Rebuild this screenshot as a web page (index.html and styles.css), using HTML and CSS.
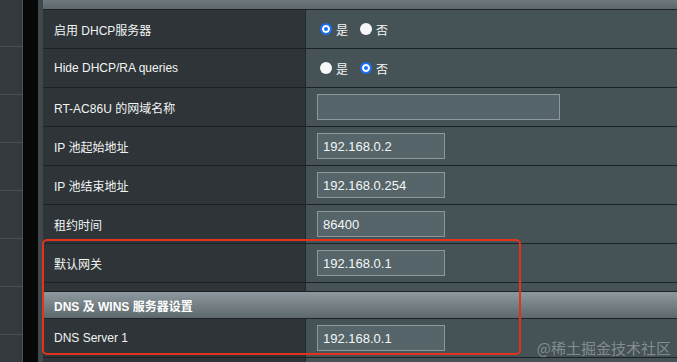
FILE: index.html
```html
<!DOCTYPE html>
<html lang="zh-CN">
<head>
    <meta charset="UTF-8">
    <meta name="viewport" content="width=device-width, initial-scale=1.0">
    <title>LAN - DHCP Server</title>
    <link rel="stylesheet" href="styles.css">
</head>
<body>
    <div class="page">
        <!-- Left menu (cut off) -->
        <div class="menu">
            <div class="menu-item"></div>
            <div class="menu-item"></div>
            <div class="menu-item"></div>
            <div class="menu-item"></div>
            <div class="menu-item"></div>
            <div class="menu-item"></div>
            <div class="menu-item"></div>
            <div class="menu-item"></div>
        </div>
        <div class="gap"></div>

        <!-- Settings table -->
        <div class="content">
            <div class="section-head top"></div>

            <div class="row">
                <div class="label">启用 DHCP服务器</div>
                <div class="value">
                    <span class="radio checked"></span><span class="radio-text">是</span>
                    <span class="radio"></span><span class="radio-text">否</span>
                </div>
            </div>
            <div class="row">
                <div class="label">Hide DHCP/RA queries</div>
                <div class="value">
                    <span class="radio"></span><span class="radio-text">是</span>
                    <span class="radio checked"></span><span class="radio-text">否</span>
                </div>
            </div>
            <div class="row">
                <div class="label">RT-AC86U 的网域名称</div>
                <div class="value"><input class="field wide" type="text" value=""></div>
            </div>
            <div class="row">
                <div class="label">IP 池起始地址</div>
                <div class="value"><input class="field" type="text" value="192.168.0.2"></div>
            </div>
            <div class="row">
                <div class="label">IP 池结束地址</div>
                <div class="value"><input class="field" type="text" value="192.168.0.254"></div>
            </div>
            <div class="row">
                <div class="label">租约时间</div>
                <div class="value"><input class="field" type="text" value="86400"></div>
            </div>
            <div class="row">
                <div class="label">默认网关</div>
                <div class="value"><input class="field" type="text" value="192.168.0.1"></div>
            </div>
            <div class="row spacer">
                <div class="label"></div>
                <div class="value"></div>
            </div>

            <div class="section-head">DNS 及 WINS 服务器设置</div>

            <div class="row">
                <div class="label">DNS Server 1</div>
                <div class="value"><input class="field" type="text" value="192.168.0.1"></div>
            </div>
            <div class="row">
                <div class="label"></div>
                <div class="value"></div>
            </div>

            <!-- Highlight box drawn over the table -->
            <div class="highlight"></div>
        </div>
    </div>

    <div class="watermark">@稀土掘金技术社区</div>
</body>
</html>
```

FILE: styles.css
```css
/* Base page */
body {
    margin: 0;
    padding: 0;
    background-color: #000;
    font-family: "Liberation Sans", "Noto Sans CJK SC", sans-serif;
    font-size: 12px;
    color: #f2f4f4;
    overflow: hidden;
}

.page {
    display: flex;
    height: 362px;
}

/* Left menu column */
.menu {
    width: 22px;
    flex-shrink: 0;
    background-color: #33393c;
    border-right: 1px solid #4c5356;
    margin-top: -1px;
}

.menu-item {
    height: 47px;
    border-bottom: 1px solid #4a5053;
}

.gap {
    width: 15px;
    flex-shrink: 0;
    background-color: #060707;
}

/* Main table area */
.content {
    position: relative;
    flex: 1;
    border-left: 5px solid #41484b;
    background-color: #2e3437;
}

.section-head {
    height: 26px;
    display: flex;
    align-items: center;
    padding-left: 11px;
    font-weight: bold;
    color: #ffffff;
    background: linear-gradient(#8d999e, #5d686c);
    border-bottom: 1px solid #1d2224;
}

.section-head.top {
    margin-top: -17px;
}

.row {
    display: grid;
    grid-template-columns: 263px 1fr;
    border-bottom: 1px solid #1d2224;
}

.label {
    height: 38px;
    display: flex;
    align-items: center;
    padding-left: 11px;
    background-color: #2e3437;
    border-right: 1px solid #232829;
}

.value {
    height: 38px;
    display: flex;
    align-items: center;
    padding-left: 11px;
    background-color: #455256;
}

.spacer .label,
.spacer .value {
    height: 8px;
}

/* Radio buttons */
.radio {
    width: 12px;
    height: 12px;
    border-radius: 50%;
    background-color: #f7f7f7;
    margin-left: 3px;
    flex-shrink: 0;
}

.radio.checked {
    box-sizing: border-box;
    background-color: #1c6ff2;
    border: 2px solid #1c6ff2;
    box-shadow: inset 0 0 0 2px #ffffff;
}

.radio-text {
    margin-left: 4px;
    margin-right: 9px;
    font-size: 12px;
    color: #f4f4f4;
}

/* Text inputs */
.field {
    box-sizing: border-box;
    width: 128px;
    height: 26px;
    padding: 0 5px;
    background-color: #566569;
    border: 1px solid #8e989c;
    color: #f4f6f6;
    font-family: "Liberation Sans", sans-serif;
    font-size: 13px;
    outline: none;
}

.field.wide {
    width: 243px;
}

/* Red highlight frame */
.highlight {
    position: absolute;
    left: -1px;
    top: 239px;
    width: 475px;
    height: 112px;
    border: 2px solid #e5321c;
    border-radius: 5px;
}

.watermark {
    position: absolute;
    right: 6px;
    bottom: 4px;
    font-family: "Noto Sans CJK SC", sans-serif;
    font-size: 15px;
    color: rgba(210, 215, 216, 0.45);
}
```
